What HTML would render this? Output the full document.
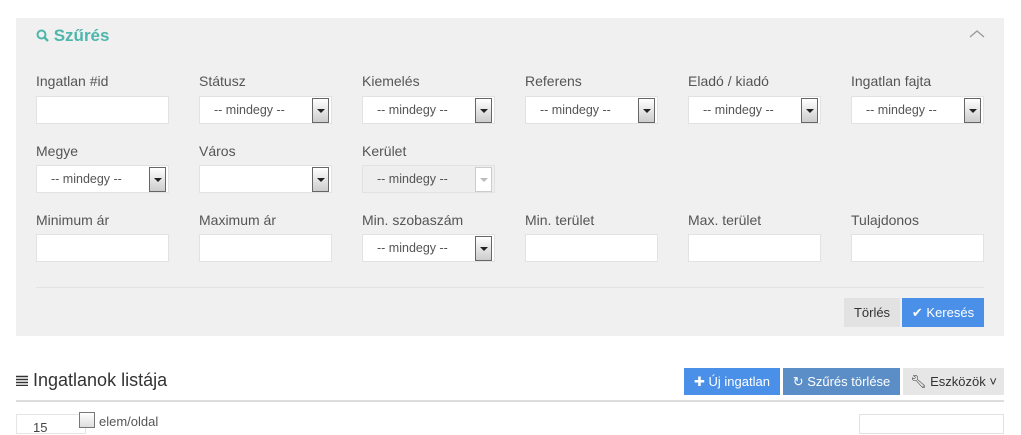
<!DOCTYPE html>
<html><head><meta charset="utf-8"><style>
*{box-sizing:border-box;margin:0;padding:0}
body{width:1021px;height:425px;overflow:hidden;background:#fff;font-family:"Liberation Sans",sans-serif;color:#444;position:relative}
.abs{position:absolute}
.panel{left:16px;top:18px;width:988px;height:318px;background:#f0f0f0}
.title{left:36px;top:26px;font-size:17px;font-weight:bold;color:#4db6ac;}
.lbl{font-size:14px;color:#555}
.inp{width:133px;height:28px;background:#fff;border:1px solid #e2e2e2}
.sel{width:133px;height:28px;background:#fff;border:1px solid #e2e2e2;font-size:12.5px;color:#555;padding:6px 0 0 14px}
.sel .ar{position:absolute;right:2px;top:1px;width:17px;height:25px;border:1px solid #666;background:linear-gradient(#fff,#ccc)}
.sel .ar:after{content:"";position:absolute;left:4px;top:10px;border-left:4px solid transparent;border-right:4px solid transparent;border-top:4px solid #222}
.dis{background:#eee}
.dis .ar{border-color:#ccc;background:#fff}
.dis .ar:after{border-top-color:#bbb}
.btn{height:29px;font-size:13px;line-height:29px;text-align:center;color:#fff}
</style></head><body>
<div class="abs panel"></div>
<div class="abs title"><svg width="13" height="13" viewBox="0 0 13 13" style="vertical-align:-1px"><circle cx="5.5" cy="5.5" r="4" fill="none" stroke="#4db6ac" stroke-width="2"/><path d="M8.5 8.5 12 12" stroke="#4db6ac" stroke-width="2.4"/></svg> Szűrés</div>
<svg class="abs" style="left:969px;top:29px" width="16" height="10"><path d="M1 8 8 2 15 8" fill="none" stroke="#999" stroke-width="1.3"/></svg>

<div class="abs lbl" style="left:36px;top:73px">Ingatlan #id</div>
<div class="abs lbl" style="left:199px;top:73px">Státusz</div>
<div class="abs lbl" style="left:362px;top:73px">Kiemelés</div>
<div class="abs lbl" style="left:525px;top:73px">Referens</div>
<div class="abs lbl" style="left:688px;top:73px">Eladó / kiadó</div>
<div class="abs lbl" style="left:851px;top:73px">Ingatlan fajta</div>
<div class="abs inp" style="left:36px;top:96px"></div>
<div class="abs sel" style="left:199px;top:96px">-- mindegy --<span class="ar"></span></div>
<div class="abs sel" style="left:362px;top:96px">-- mindegy --<span class="ar"></span></div>
<div class="abs sel" style="left:525px;top:96px">-- mindegy --<span class="ar"></span></div>
<div class="abs sel" style="left:688px;top:96px">-- mindegy --<span class="ar"></span></div>
<div class="abs sel" style="left:851px;top:96px">-- mindegy --<span class="ar"></span></div>

<div class="abs lbl" style="left:36px;top:143px">Megye</div>
<div class="abs lbl" style="left:199px;top:143px">Város</div>
<div class="abs lbl" style="left:362px;top:143px">Kerület</div>
<div class="abs sel" style="left:36px;top:165px">-- mindegy --<span class="ar"></span></div>
<div class="abs sel" style="left:199px;top:165px"><span class="ar"></span></div>
<div class="abs sel dis" style="left:362px;top:165px">-- mindegy --<span class="ar"></span></div>

<div class="abs lbl" style="left:36px;top:212px">Minimum ár</div>
<div class="abs lbl" style="left:199px;top:212px">Maximum ár</div>
<div class="abs lbl" style="left:362px;top:212px">Min. szobaszám</div>
<div class="abs lbl" style="left:525px;top:212px">Min. terület</div>
<div class="abs lbl" style="left:688px;top:212px">Max. terület</div>
<div class="abs lbl" style="left:851px;top:212px">Tulajdonos</div>
<div class="abs inp" style="left:36px;top:234px"></div>
<div class="abs inp" style="left:199px;top:234px"></div>
<div class="abs sel" style="left:362px;top:234px">-- mindegy --<span class="ar"></span></div>
<div class="abs inp" style="left:525px;top:234px"></div>
<div class="abs inp" style="left:688px;top:234px"></div>
<div class="abs inp" style="left:851px;top:234px"></div>

<div class="abs" style="left:36px;top:287px;width:948px;height:1px;background:#e2e2e2"></div>
<div class="abs btn" style="left:844px;top:298px;width:56px;background:#e2e2e2;color:#333">Törlés</div>
<div class="abs btn" style="left:902px;top:298px;width:82px;background:#4a90e8">✔ Keresés</div>

<div class="abs" style="left:16px;top:370px;font-size:18px;color:#333"><svg width="12" height="11" style="vertical-align:0"><path d="M0 1.5h12M0 4.5h12M0 7.5h12M0 10.5h12" stroke="#333" stroke-width="1.4"/></svg> Ingatlanok listája</div>
<div class="abs btn" style="left:684px;top:368px;width:96px;height:27px;line-height:27px;background:#4a90e8">✚ Új ingatlan</div>
<div class="abs btn" style="left:783px;top:368px;width:117px;height:27px;line-height:27px;background:#5b8ec6">↻ Szűrés törlése</div>
<div class="abs btn" style="left:903px;top:368px;width:101px;height:27px;line-height:27px;background:#e6e6e6;color:#333">🔧︎ Eszközök ˅</div>
<div class="abs" style="left:16px;top:400px;width:988px;height:2px;background:#ddd"></div>

<div class="abs" style="left:16px;top:414px;width:70px;height:20px;border:1px solid #e5e5e5;font-size:13px;padding:5px 0 0 16px">15</div>
<div class="abs" style="left:79px;top:412px;width:16px;height:16px;border:1px solid #777;background:linear-gradient(#fff,#ddd)"></div>
<div class="abs" style="left:99px;top:414px;font-size:13px;color:#555">elem/oldal</div>
<div class="abs" style="left:859px;top:414px;width:145px;height:20px;border:1px solid #e2e2e2"></div>
</body></html>
